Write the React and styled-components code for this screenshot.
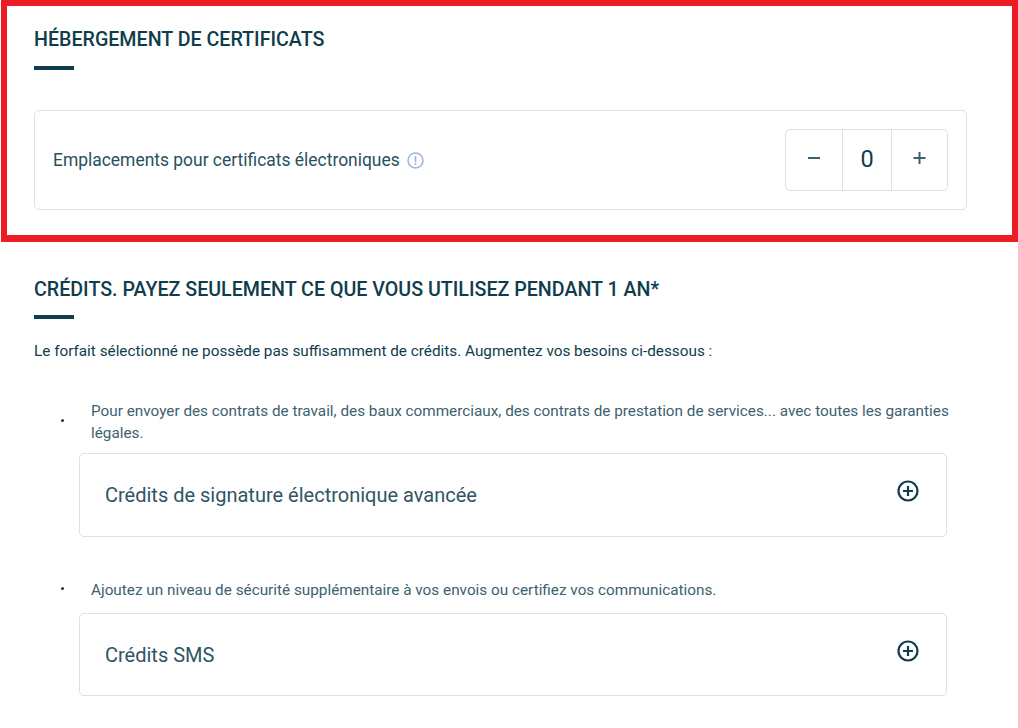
import React from 'react';
import styled, { createGlobalStyle } from 'styled-components';

const GlobalStyle = createGlobalStyle`
  html, body {
    margin: 0;
    padding: 0;
    background: #fff;
  }
  body {
    font-family: Roboto, "Liberation Sans", sans-serif;
    color: #0f3d4c;
    overflow: hidden;
  }
`;

const Page = styled.div`
  width: 1018px;
  height: 728px;
  overflow: hidden;
`;

const Highlight = styled.section`
  box-sizing: border-box;
  width: 1017px;
  height: 242px;
  margin-left: 1px;
  padding: 21px 45px 0 27px;
  border: 6px solid #ed1c24;
  border-bottom-width: 7px;
`;

const Section = styled.section`
  padding: 35px 71px 0 34px;
`;

const Title = styled.h2`
  margin: 0;
  font-size: 19.65px;
  line-height: 26px;
  font-weight: 500;
  color: #0f3d4c;
  text-transform: uppercase;
  white-space: nowrap;
`;

const TitleBar = styled.div`
  width: 40px;
  height: 4px;
  margin-top: ${(p) => p.$gap}px;
  background: #0f3d4c;
`;

const SlotCard = styled.div`
  box-sizing: border-box;
  height: 100px;
  margin-top: 40px;
  padding: 0 18px;
  display: flex;
  align-items: center;
  justify-content: space-between;
  border: 1px solid #dadfeb;
  border-radius: 5px;
`;

const SlotLabel = styled.div`
  display: flex;
  align-items: center;
  gap: 7px;
  font-size: 17.45px;
  color: #28505e;
`;

const Stepper = styled.div`
  box-sizing: border-box;
  width: 163px;
  height: 62px;
  display: flex;
  border: 1px solid #dadfeb;
  border-radius: 5px;
`;

const StepButton = styled.div`
  width: ${(p) => p.$width}px;
  display: flex;
  align-items: center;
  justify-content: center;
  padding-bottom: 4px;
  box-sizing: border-box;
  color: #3d6170;
`;

const StepValue = styled.div`
  box-sizing: border-box;
  width: 50px;
  display: flex;
  align-items: center;
  justify-content: center;
  padding-bottom: 2px;
  border-left: 1px solid #dadfeb;
  border-right: 1px solid #dadfeb;
  font-size: 23.5px;
  color: #0f3d4c;
`;

const Intro = styled.p`
  margin: 22px 0 0;
  font-size: 15.3px;
  line-height: 20px;
  color: #0f3d4c;
`;

const CreditList = styled.ul`
  margin: 0;
  padding: 0;
  list-style: none;
`;

const CreditItem = styled.li`
  margin-top: ${(p) => p.$top}px;
`;

const CreditHead = styled.div`
  display: flex;
  align-items: center;
  margin: 0 -10px ${(p) => p.$gap}px 0;
  padding-left: 27px;
`;

const Bullet = styled.span`
  width: 3px;
  height: 3px;
  margin-bottom: 4px;
  flex: none;
  border-radius: 50%;
  background: #0f3d4c;
`;

const CreditText = styled.p`
  margin: 0 0 0 27px;
  font-size: 15.3px;
  line-height: 22px;
  color: #3d6170;
`;

const Accordion = styled.div`
  box-sizing: border-box;
  height: ${(p) => p.$height}px;
  margin-left: 45px;
  padding: 0 27px 0 25px;
  display: flex;
  align-items: center;
  justify-content: space-between;
  border: 1px solid #dadfeb;
  border-radius: 5px;
  font-size: 20px;
  color: #2f5563;
`;

const AccordionIcon = styled.svg`
  width: 22px;
  height: 22px;
  margin-bottom: 8px;
  flex: none;
`;

const InfoIcon = () => (
  <svg width="17" height="17" viewBox="0 0 17 17" fill="none">
    <circle cx="8.5" cy="8.5" r="7.5" stroke="#9db4d4" strokeWidth="1.5" />
    <path d="M8.5 4.5v5" stroke="#9db4d4" strokeWidth="1.6" strokeLinecap="round" />
    <circle cx="8.5" cy="12" r="1" fill="#9db4d4" />
  </svg>
);

const MinusIcon = () => (
  <svg width="14" height="14" viewBox="0 0 14 14">
    <path d="M1 7h12" stroke="currentColor" strokeWidth="2" />
  </svg>
);

const PlusIcon = () => (
  <svg width="14" height="14" viewBox="0 0 14 14">
    <path d="M.5 7h12M6.5 1v12" stroke="currentColor" strokeWidth="2" />
  </svg>
);

const CirclePlus = () => (
  <AccordionIcon viewBox="0 0 22 22" fill="none">
    <circle cx="11" cy="11" r="9.5" stroke="#0f3d4c" strokeWidth="2.2" />
    <path d="M6 11h10M11 6v10" stroke="#0f3d4c" strokeWidth="2.2" />
  </AccordionIcon>
);

const credits = [
  {
    id: 'signature',
    top: 39,
    gap: 9,
    text: 'Pour envoyer des contrats de travail, des baux commerciaux, des contrats de prestation de services... avec toutes les garanties légales.',
    title: 'Crédits de signature électronique avancée',
    height: 84,
  },
  {
    id: 'sms',
    top: 42,
    gap: 12,
    text: 'Ajoutez un niveau de sécurité supplémentaire à vos envois ou certifiez vos communications.',
    title: 'Crédits SMS',
    height: 83,
  },
];

const App = () => (
  <Page>
    <GlobalStyle />
    <Highlight>
      <Title>Hébergement de certificats</Title>
      <TitleBar $gap={13} />
      <SlotCard>
        <SlotLabel>
          Emplacements pour certificats électroniques
          <InfoIcon />
        </SlotLabel>
        <Stepper>
          <StepButton $width={56}>
            <MinusIcon />
          </StepButton>
          <StepValue>0</StepValue>
          <StepButton $width={55}>
            <PlusIcon />
          </StepButton>
        </Stepper>
      </SlotCard>
    </Highlight>
    <Section>
      <Title>Crédits. Payez seulement ce que vous utilisez pendant 1 an*</Title>
      <TitleBar $gap={12} />
      <Intro>Le forfait sélectionné ne possède pas suffisamment de crédits. Augmentez vos besoins ci-dessous :</Intro>
      <CreditList>
        {credits.map((credit) => (
          <CreditItem key={credit.id} $top={credit.top}>
            <CreditHead $gap={credit.gap}>
              <Bullet />
              <CreditText>{credit.text}</CreditText>
            </CreditHead>
            <Accordion $height={credit.height}>
              {credit.title}
              <CirclePlus />
            </Accordion>
          </CreditItem>
        ))}
      </CreditList>
    </Section>
  </Page>
);

export default App;
